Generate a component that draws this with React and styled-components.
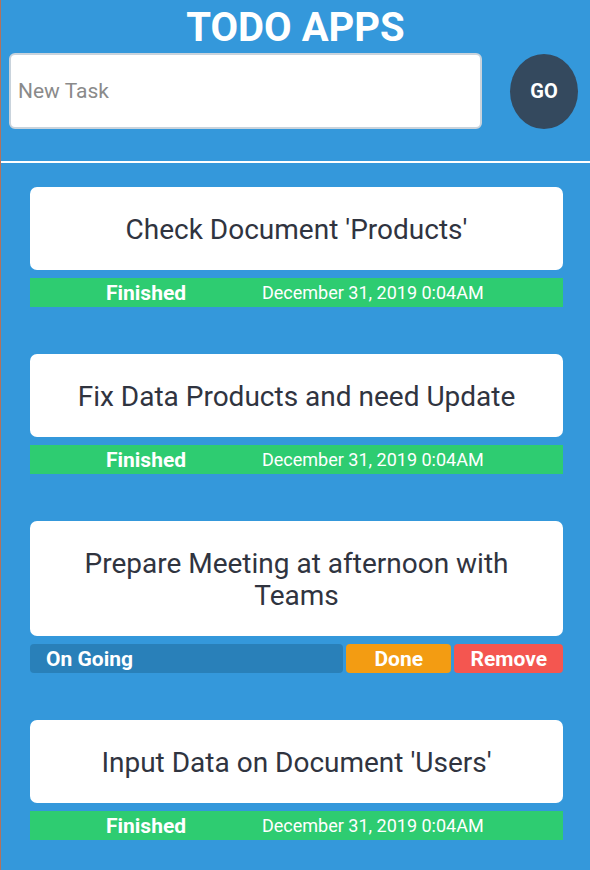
import styled, { createGlobalStyle } from "styled-components";

const GlobalStyle = createGlobalStyle`
  html, body {
    margin: 0;
    padding: 0;
    background: #3498db;
  }
  * {
    box-sizing: border-box;
  }
`;

const tasks = [
  { id: 1, title: "Check Document 'Products'", done: true },
  { id: 2, title: "Fix Data Products and need Update", done: true },
  { id: 3, title: "Prepare Meeting at afternoon with Teams", done: false },
  { id: 4, title: "Input Data on Document 'Users'", done: true },
];

const App = () => {
  return (
    <Page>
      <GlobalStyle />
      <Header>
        <Title>TODO APPS</Title>
        <Form>
          <Input placeholder="New Task" />
          <GoButton>GO</GoButton>
        </Form>
      </Header>
      <Divider />
      <List>
        {tasks.map((task) => (
          <Item key={task.id}>
            <Card>{task.title}</Card>
            {task.done ? (
              <FinishedBar>
                <Status>Finished</Status>
                <DateText>December 31, 2019 0:04AM</DateText>
              </FinishedBar>
            ) : (
              <Actions>
                <Pill color="#2980b9" align="left">On Going</Pill>
                <Pill color="#f39c12">Done</Pill>
                <Pill color="#f45650">Remove</Pill>
              </Actions>
            )}
          </Item>
        ))}
      </List>
    </Page>
  );
};

const Page = styled.div`
  min-height: 870px;
  background: #3498db;
  border-left: 1px solid #b0725f;
  font-family: Roboto, "Liberation Sans", sans-serif;
`;

const Header = styled.div`
  padding-top: 4px;
`;

const Title = styled.h1`
  margin: 0;
  text-align: center;
  color: #fff;
  font-size: 40px;
  font-weight: 700;
  line-height: 47px;
`;

const Form = styled.div`
  display: flex;
  align-items: center;
  padding: 2px 12px 0 8px;
  gap: 28px;
`;

const Input = styled.input`
  flex: 1;
  height: 76px;
  border: 2px solid #c9d3dc;
  border-radius: 6px;
  padding: 0 7px;
  font-family: Roboto, sans-serif;
  font-size: 21px;
  color: #333;
  outline: none;
  &::placeholder {
    color: #8a8a8a;
  }
`;

const GoButton = styled.button`
  width: 68px;
  height: 75px;
  border: none;
  border-radius: 50%;
  background: #34495e;
  color: #fff;
  font-family: Roboto, sans-serif;
  font-weight: 700;
  font-size: 20px;
`;

const Divider = styled.div`
  height: 2px;
  background: #fff;
  margin-top: 32px;
`;

const List = styled.div`
  display: flex;
  flex-direction: column;
  gap: 47px;
  padding: 24px 27px 0 29px;
`;

const Item = styled.div`
  display: flex;
  flex-direction: column;
  gap: 8px;
`;

const Card = styled.div`
  background: #fff;
  border-radius: 7px;
  padding: 27px 36px 24px;
  text-align: center;
  font-size: 28px;
  line-height: 32px;
  color: #30343f;
`;

const FinishedBar = styled.div`
  display: grid;
  grid-template-columns: 232px 1fr;
  height: 29px;
  align-items: center;
  background: #2ecc71;
  color: #fff;
`;

const Status = styled.span`
  text-align: center;
  font-weight: 700;
  font-size: 21px;
`;

const DateText = styled.span`
  font-size: 18px;
`;

const Actions = styled.div`
  display: grid;
  grid-template-columns: 313px 1fr 1fr;
  gap: 3px;
  height: 29px;
`;

const Pill = styled.div`
  display: flex;
  align-items: center;
  justify-content: ${(p) => (p.align === "left" ? "flex-start" : "center")};
  padding: 0 16px;
  border-radius: 4px;
  background: ${(p) => p.color};
  color: #fff;
  font-weight: 700;
  font-size: 21px;
`;

export default App;
